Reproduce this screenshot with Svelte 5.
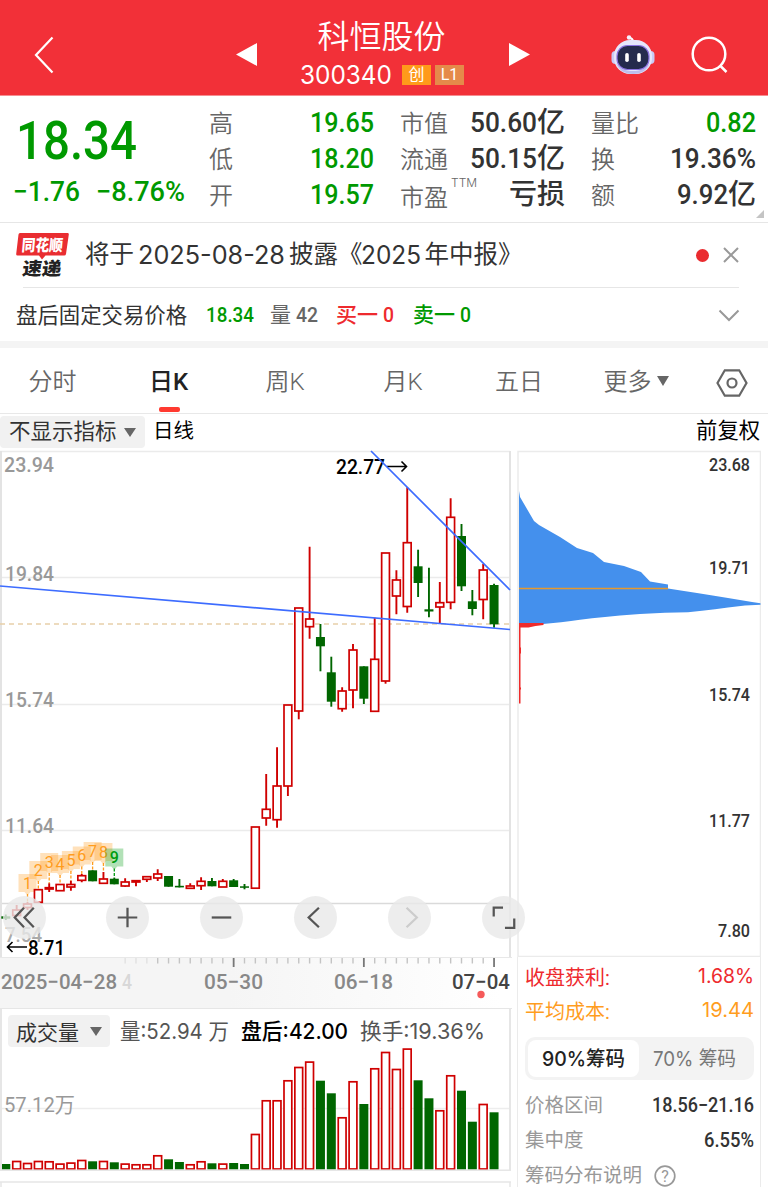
<script>
  const RED = '#cf0000';
  const GREEN = '#006600';

  const step = 10.85;
  const cx = (i) => 5.8 + i * step;

  // [high, body top, body bottom, low, up?] in chart pixels
  const candles = [
    [914.5, 916.3, 918.7, 920, 0], [905, 910, 915.5, 916, 1], [902, 904, 907.5, 910, 1],
    [889.5, 889.7, 902.3, 902.5, 1], [883.3, 887.7, 889, 892, 1], [884, 884.5, 890.7, 891, 1],
    [880.7, 884.5, 887, 890.7, 1], [874, 875.7, 880.3, 882.3, 1], [870.3, 870.3, 881.3, 881.3, 0],
    [872, 879, 883.3, 884, 1], [877.7, 878.7, 884.3, 884.3, 0], [878.3, 882, 886, 886.7, 1],
    [880, 880.7, 882, 886.3, 1], [876, 876.7, 879.3, 882, 1], [869.3, 874, 878, 881, 1],
    [876, 876, 886.7, 886.7, 0], [879, 885.8, 887.4, 887.4, 0], [883.3, 886, 888.3, 889, 1],
    [877.3, 881.3, 885.7, 890, 1], [878, 881, 886.3, 886.3, 0], [879, 881.3, 887, 887, 1],
    [879, 880.3, 887, 887, 0], [884, 886.3, 887.8, 889.3, 0], [827, 827, 888.2, 888.2, 1],
    [774, 809.3, 818, 825.7, 1], [747.3, 786, 819.7, 827.7, 1], [705, 705, 786, 796, 1],
    [608, 608, 711, 719.3, 1], [546.7, 619, 626.7, 638.7, 1], [624, 637, 646.3, 671.3, 0],
    [656.7, 672.3, 701.7, 706.7, 0], [687.3, 691, 708.7, 711.7, 1], [644, 650, 690, 708.3, 1],
    [666.3, 666.3, 698.7, 704, 0], [617.7, 659.3, 711.3, 711.3, 1], [553, 553, 681, 683.7, 1],
    [570.3, 580, 596, 614.3, 1], [487.3, 542.7, 606.5, 612.7, 1], [549.7, 566.3, 583, 597, 0],
    [567.7, 609.3, 611.5, 617.3, 0], [582, 602.7, 607, 623.3, 1], [498.3, 517.3, 602.3, 609.3, 1],
    [524, 536, 586.3, 591, 0], [590, 601.3, 609, 615.3, 0], [564, 570, 599.5, 619.3, 1],
    [583.7, 585, 624.3, 627.7, 0]
  ];

  // top edge of each volume bar
  const volumes = [
    1164, 1160.7, 1162.7, 1160.7, 1161, 1163.3, 1162.3, 1159.7, 1161.3, 1160.7, 1162.3, 1163.3,
    1164, 1164, 1155, 1159.3, 1162, 1164, 1161, 1163.3, 1163.3, 1163, 1164, 1133.7, 1100, 1100,
    1080, 1066.7, 1061.3, 1080.7, 1093.3, 1117, 1081, 1104, 1068, 1051.7, 1068.7, 1048.3, 1080.3,
    1098.3, 1110, 1075, 1090.7, 1121.7, 1103.7, 1112.3
  ];

  // nine-turn markers, first one sits on candle 2
  const marks = [883, 870, 862, 864, 860, 855.5, 851, 852, 857.5];

  const ticks = candles.map((_, i) => i).filter((i) => i > 10);

  const prices = [
    ['高', '19.65'],
    ['低', '18.20'],
    ['开', '19.57']
  ];

  const chips =
    '519,491 520,497 534,521 539,525 560,537 577,548 593,553 604,562 624,566 641,572 650,581.5 668,584.5 668,588.5 684,591 697,593 711,595.2 728,598 740,600 752,602 760.5,603.3 760.5,604.7 745,605.5 728,607.5 715,609.3 702,610.7 688,612.3 665,612.8 640,614 620,615.5 605,617 592,618.3 580,619.7 571,621 561,622.3 543,624 519,624';
</script>

{#snippet fit(text, width, size, weight = 500, font = 'Roboto')}
  <svg class="fit" {width} height={Math.round(size * 0.71)}>
    <text
      x="0"
      y={Math.round(size * 0.71)}
      textLength={width}
      lengthAdjust="spacingAndGlyphs"
      font-size={size}
      font-weight={weight}
      font-family="{font}, 'Noto Sans CJK SC', sans-serif"
      fill="currentColor">{text}</text>
  </svg>
{/snippet}

{#snippet label(text, x, y, width, size, fill, weight = 400)}
  <text
    {x}
    {y}
    {fill}
    textLength={width}
    lengthAdjust="spacingAndGlyphs"
    font-size={size}
    font-weight={weight}>{text}</text>
{/snippet}

<div class="page">
  <header>
    <svg class="back" width="20" height="38" viewBox="0 0 20 38"><path d="M18.5 1.5 2 19l16.500 17.500" /></svg>
    <svg class="prev" width="21" height="23"><path d="M21 0v23L0 11.500z" /></svg>
    <div class="title">
      <div class="name">科恒股份</div>
      <div class="code">
        {@render fit('300340', 92, 25, 400, 'Inter')}
        <span class="tag">创</span><span class="tag level">L1</span>
      </div>
    </div>
    <svg class="next" width="21" height="23"><path d="M0 0v23l21-11.500z" /></svg>
    <svg class="robot" width="44" height="42" viewBox="0 0 44 42">
      <path d="M22 8c0-3-1-4-4-4" fill="none" stroke="#fff" stroke-width="2" />
      <circle cx="18" cy="3.500" r="2.200" fill="#f5f2ff" />
      <rect x="0.500" y="17" width="9" height="13" rx="4" fill="#c9caf6" />
      <rect x="34.500" y="17" width="9" height="13" rx="4" fill="#c9caf6" />
      <rect x="3" y="6" width="38" height="34" rx="16" fill="#e6e6fb" />
      <path d="M5 29c3 7 8 11 17 11s14-4 17-11c-4 6-9 8-17 8S9 35 5 29z" fill="#bcbdec" />
      <rect x="6" y="11.500" width="32" height="24" rx="10.500" fill="#252b4d" stroke="#8b72e0" stroke-width="1.200" />
      <rect x="14.200" y="19" width="3.600" height="9" rx="1.800" fill="#fff" />
      <rect x="26.200" y="19" width="3.600" height="9" rx="1.800" fill="#fff" />
    </svg>
    <svg class="search" width="38" height="38" viewBox="0 0 38 38"><circle cx="18" cy="18" r="16.300" /><path d="m29.500 30 6 6" /></svg>
  </header>

  <section class="quote">
    <div class="price green">
      <div class="last">{@render fit('18.34', 121, 54.5, 500)}</div>
      <div class="change">
        {@render fit('−1.76', 67, 28)}
        {@render fit('−8.76%', 89, 28)}
      </div>
    </div>
    <div class="col">
      {#each prices as [name, value]}
        <div class="cell"><span>{name}</span><b class="green">{@render fit(value, 64, 28)}</b></div>
      {/each}
    </div>
    <div class="col">
      <div class="cell"><span>市值</span><b>{@render fit('50.60', 67, 28)}亿</b></div>
      <div class="cell"><span>流通</span><b>{@render fit('50.15', 67, 28)}亿</b></div>
      <div class="cell"><span class="low">市盈<sup>TTM</sup></span><b>亏损</b></div>
    </div>
    <div class="col">
      <div class="cell"><span>量比</span><b class="green">{@render fit('0.82', 50, 28)}</b></div>
      <div class="cell"><span>换</span><b>{@render fit('19.36%', 86, 28)}</b></div>
      <div class="cell"><span>额</span><b>{@render fit('9.92', 51, 28)}亿</b></div>
    </div>
    <i class="corner"></i>
  </section>

  <section class="news">
    <svg class="logo" width="54" height="46" viewBox="0 0 54 46">
      <path d="M4 1h47.500q1.500 0 1.300 1.500L50 22q-.3 1.500-1.800 1.500H29.500L26 27.500l-3-4H1.500Q0 23.500.2 22L2.500 2.500Q2.700 1 4 1z" fill="#e92d31" />
      <text x="7" y="19" font-size="16" textLength="41" lengthAdjust="spacingAndGlyphs" fill="#fff" transform="skewX(-5)">同花顺</text>
      <text x="11" y="43" font-size="18" textLength="39" lengthAdjust="spacingAndGlyphs" fill="#222" transform="skewX(-7)">速递</text>
    </svg>
    <div class="headline">
      <span>将于</span>
      {@render fit('2025-08-28', 147, 25, 400, 'Inter')}
      <span>披露《</span>
      {@render fit('2025', 60, 25, 400, 'Inter')}
      <span>年中报》</span>
    </div>
    <i class="dot"></i>
    <svg class="close" width="16" height="16"><path d="m1 1 14 14M15 1 1 15" /></svg>
  </section>

  <section class="after">
    <span class="fixed">盘后固定交易价格</span>
    <span class="green p">{@render fit('18.34', 48, 21)}</span>
    <span class="gray vol">量 {@render fit('42', 22, 21)}</span>
    <span class="red bid">买一 {@render fit('0', 11, 21)}</span>
    <span class="green">卖一 {@render fit('0', 11, 21)}</span>
    <svg class="chev" width="22" height="13"><path d="m1.500 1.500 9.500 9.500 9.500-9.500" /></svg>
  </section>

  <nav>
    <span>分时</span>
    <span class="active">日K</span>
    <span>周K</span>
    <span>月K</span>
    <span>五日</span>
    <span class="more">更多<svg width="12" height="10"><path d="M0 0h12L6 10z" /></svg></span>
    <svg class="gear" width="32" height="28" viewBox="0 0 32 28"><path d="M8.800 1.300h14.400L30.500 14l-7.300 12.700H8.800L1.500 14z" /><circle cx="16" cy="14" r="4.500" /></svg>
  </nav>

  <div class="toolbar">
    <span class="select">不显示指标<svg width="12" height="9"><path d="M0 0h12L6 9z" /></svg></span>
    <span class="period">日线</span>
    <span class="adjust">前复权</span>
  </div>

  <main>
    <div class="left">
      <svg class="kline" width="512" height="507" viewBox="0 450 512 507">
        <g stroke="#ebebeb" stroke-width="1.5" fill="none">
          <path d="M0 451.500h510M2 577.500h508M2 704.500h508M2 830.500h508" />
          <path d="M1 451v506M510 451v506" stroke="#e3e3e3" stroke-width="2" />
          <path d="M2 903.500h508" stroke="#dadada" />
        </g>
        {@render label('23.94', 4, 472, 50, 21, '#999', 500)}
        {@render label('19.84', 5, 581, 49, 21, '#999', 500)}
        {@render label('15.74', 5, 707, 49, 21, '#999', 500)}
        {@render label('11.64', 5, 833, 49, 21, '#999', 500)}
        {@render label('7.54', 5, 942, 37, 21, '#aaa', 500)}
        <path d="M0 624h510" stroke="#e8d0a9" stroke-width="1.300" stroke-dasharray="5 4" />

        {#each marks as y, i}
          {@const x = cx(i + 2)}
          {@const tint = i === 8 ? '#009c10' : '#ff9d1e'}
          <path
            d="M{x - 9} {y - 9}h18v18h-6l-3 3.500-3-3.500h-6z"
            fill={tint}
            fill-opacity="0.3" />
          <path d="M{x} {y + 11}V{candles[i + 2][0]}" stroke={tint} stroke-width="1.300" stroke-dasharray="3 1.500" />
          <text {x} y={y + 5.5} text-anchor="middle" font-size="16" font-weight={i === 8 ? 500 : 400} fill={tint}>{i + 1}</text>
        {/each}

        {#each candles as [high, top, bottom, low, up], i}
          {@const x = cx(i)}
          {#if up}
            <path d="M{x} {high}V{top}M{x} {bottom}V{low}" stroke={RED} stroke-width="1.900" />
            <rect x={x - 3.9} y={top} width="7.8" height={bottom - top} fill="#fff" stroke={RED} stroke-width="1.700" />
          {:else}
            <path d="M{x} {high}V{low}" stroke={GREEN} stroke-width="1.900" />
            <rect x={x - 4.5} y={top} width="9" height={bottom - top} fill={GREEN} />
          {/if}
        {/each}

        {@render label('22.77', 336, 474, 49, 21, '#000', 500)}
        <path class="arrow" d="M387 466.500h19.500m-5-5 5 5-5 5" />
        {@render label('8.71', 28, 954.5, 37, 21, '#000', 500)}
        <path class="arrow" d="M27 947H7.500m5-5-5 5 5 5" />
        <path class="trend" d="M0 586 510 629.500M371 451l139 139" />
      </svg>

      <svg class="axis" width="512" height="50" viewBox="0 957 512 50">
        {#each ticks as i}
          {@const major = [21, 33, 45].includes(i)}
          <path
            d="M{cx(i)} 957v{major ? 9 : 5.500}"
            stroke={major ? '#777' : '#c4c4c4'}
            stroke-width={major ? 1.8 : 1.4}
            opacity={i < 14 ? 0.4 : 1} />
        {/each}
        {@render label('2025−04−28', 1, 987.5, 116, 21, '#888', 500)}
        {@render label('4', 122, 987.5, 10, 21, '#d8d8d8', 500)}
        {@render label('05−30', 204, 987.5, 59, 21, '#888', 500)}
        {@render label('06−18', 334, 987.5, 59, 21, '#888', 500)}
        {@render label('07−04', 452, 987.5, 58, 21, '#444', 500)}
        <circle cx="481" cy="993.500" r="3.700" fill="#f55a5a" />
      </svg>

      <div class="controls">
        <span><svg viewBox="0 0 44 44"><path d="M21.500 12 12 22l9.500 10M31.500 12 22 22l9.500 10" /></svg></span>
        <span><svg viewBox="0 0 44 44"><path d="M22 12v20M12 22h20" /></svg></span>
        <span><svg viewBox="0 0 44 44"><path d="M12 22h20" /></svg></span>
        <span><svg viewBox="0 0 44 44"><path d="M25.500 12 15 22l10.500 10" /></svg></span>
        <span class="off"><svg viewBox="0 0 44 44"><path d="M19 12l10.500 10L19 32" /></svg></span>
        <span><svg viewBox="0 0 44 44"><path d="M12 21v-9h9.500M33 23v9.500H23.500" /></svg></span>
      </div>

      <div class="volume">
        <div class="legend">
          <span class="select">成交量<svg width="12" height="9"><path d="M0 0h12L6 9z" /></svg></span>
          <span class="v1">{@render fit('量:52.94 万', 109, 21.5, 400, 'Inter')}</span>
          <span class="v2">{@render fit('盘后:42.00', 107, 21.5, 500, 'Inter')}</span>
          <span class="v3">{@render fit('换手:19.36%', 125, 21.5, 400, 'Inter')}</span>
        </div>
        <svg width="512" height="140" viewBox="0 1047 512 140">
          <path d="M2 1108.500h508" stroke="#ededed" stroke-width="1.500" />
          {@render label('57.12万', 4, 1112, 71, 21, '#999', 400)}
          {#each volumes as y, i}
            {#if candles[i][4]}
              <rect x={cx(i) - 3.9} y={y + 0.8} width="7.8" height={1168.2 - y} fill="#fff" stroke={RED} stroke-width="1.700" />
            {:else}
              <rect x={cx(i) - 4.5} {y} width="9" height={1169.5 - y} fill={GREEN} />
            {/if}
          {/each}
          <path d="M1 1047v123M510 1047v123" stroke="#e6e6e6" stroke-width="2" />
          <path d="M0 1170.300h511M0 1182h511M1 1182v5M510 1182v5" stroke="#e6e6e6" stroke-width="1.500" />
        </svg>
      </div>
    </div>

    <div class="right">
      <svg width="244" height="507" viewBox="517 450 244 507">
        <path d="M518 957V451.500h242.500V957M518 956.500h242.500" fill="none" stroke="#ebebeb" stroke-width="1.500" />
        <polygon points={chips} fill="#4490ed" />
        <path d="M519 588.500h149" stroke="#e5992e" stroke-width="1.500" />
        <path d="M519 623h24.500v2l-8 1-7 1.500h-8v20h.5v6h-.5v34h.5v2h-.5v14h-1.500z" fill="#ee2b2b" />
        {@render label('23.68', 709, 471, 41, 18, '#333', 500)}
        {@render label('19.71', 709, 574, 41, 18, '#333', 500)}
        {@render label('15.74', 709, 700.5, 41, 18, '#333', 500)}
        {@render label('11.77', 709, 827, 41, 18, '#333', 500)}
        {@render label('7.80', 718, 937, 32, 18, '#333', 500)}
      </svg>
      <div class="info">
        <div class="row red"><span>收盘获利:</span>{@render fit('1.68%', 56, 20, 400, 'Inter')}</div>
        <div class="row orange"><span>平均成本:</span>{@render fit('19.44', 52, 20, 400, 'Inter')}</div>
        <div class="switch">
          <span class="on">{@render fit('90%筹码', 83, 20, 500, 'Inter')}</span>
          <span>{@render fit('70% 筹码', 83, 20, 400, 'Inter')}</span>
        </div>
        <div class="row"><span>价格区间</span><b>{@render fit('18.56−21.16', 102, 20)}</b></div>
        <div class="row"><span>集中度</span><b>{@render fit('6.55%', 50, 20)}</b></div>
        <div class="row help">
          <span>筹码分布说明</span>
          <svg width="22" height="22" viewBox="0 0 22 22"><circle cx="11" cy="11" r="9.800" /><text x="11" y="16.500" text-anchor="middle">?</text></svg>
        </div>
      </div>
    </div>
  </main>
</div>

<style>
  :global(body) {
    background: #fff;
    overflow: hidden;
  }
  .page {
    width: 768px;
    height: 1187px;
    overflow: hidden;
    font-family: Roboto, 'Noto Sans CJK SC', sans-serif;
    color: #333;
    background: #fff;
  }
  .page :global(svg) {
    display: block;
    flex: none;
  }
  .page .fit {
    display: inline-block;
    overflow: visible;
    vertical-align: baseline;
  }
  .green { color: #009900; }
  .red { color: #ee2a2e; }
  .orange { color: #ff9d1e; }
  .gray { color: #666; }

  header {
    display: flex;
    height: 96px;
    box-sizing: border-box;
    background: #f23038;
    color: #fff;
    border-bottom: 1px solid #f68d91;
    align-items: center;
    padding-top: 14px;
  }
  header .back, header .search {
    fill: none;
    stroke: #fff;
    stroke-width: 2.2;
  }
  header .back { margin-left: 34px; }
  header .prev { margin-left: 182px; fill: #fff; }
  header .next { fill: #fff; }
  header .robot { margin-left: 81px; }
  header .search { margin-left: 36px; stroke-width: 2.5; }
  .title {
    width: 249px;
    padding-right: 3px;
    margin-top: -14px;
    text-align: center;
  }
  .name {
    font-size: 32px;
    line-height: 38px;
    margin-top: 17px;
    font-weight: 350;
  }
  .code {
    display: flex;
    align-items: center;
    justify-content: center;
    height: 38px;
    padding-left: 1px;
  }
  .tag {
    width: 29px;
    height: 20px;
    margin-left: 10px;
    background: #ff9a1a;
    font-size: 16px;
    line-height: 20px;
  }
  .tag.level {
    margin-left: 4px;
    background: #e58a4a;
  }

  .quote {
    display: flex;
    position: relative;
    height: 126px;
    border-bottom: 1px solid #e6e6e6;
  }
  .price { width: 209px; }
  .last {
    height: 39px;
    padding: 24px 0 0 16px;
    line-height: 0;
  }
  .change {
    display: flex;
    gap: 16px;
    padding: 22px 0 0 13px;
  }
  .col {
    padding-top: 9px;
    width: 165px;
  }
  .col + .col { margin-left: 26px; }
  .cell {
    display: flex;
    justify-content: space-between;
    height: 36px;
    line-height: 36px;
    align-items: baseline;
  }
  .cell span {
    font-size: 24px;
    color: #666;
    font-weight: 350;
  }
  .cell b {
    font-size: 28px;
    font-weight: 500;
  }
  .low { position: relative; top: 2px; }
  sup {
    position: absolute;
    left: 51px;
    top: -15px;
    font-size: 12px;
    font-family: Inter, sans-serif;
  }
  .corner {
    position: absolute;
    right: 4px;
    bottom: 4px;
    border: 4.500px solid #c4c4c4;
    border-top-color: transparent;
    border-left-color: transparent;
  }

  .news {
    display: flex;
    align-items: center;
    height: 65px;
    box-sizing: border-box;
    margin: 0 29px 0 23px;
    border-bottom: 1px solid #e6e6e6;
  }
  .logo {
    margin-left: -7px;
    font-weight: 900;
    overflow: visible;
  }
  .headline {
    display: flex;
    align-items: center;
    gap: 4px;
    width: 612px;
    margin-left: 15px;
    color: #333;
    font-size: 24.500px;
    line-height: 36px;
    white-space: nowrap;
  }
  .headline span:nth-of-type(2) { margin-right: -6px; }
  .dot {
    width: 13px;
    height: 13px;
    border-radius: 50%;
    background: #ea2b2f;
  }
  .close {
    margin-left: 14px;
    stroke: #999;
    stroke-width: 2;
  }

  .after {
    display: flex;
    align-items: center;
    height: 51px;
    padding: 2px 0 0 16px;
    border-bottom: 7px solid #f4f4f4;
    font-size: 21px;
    line-height: 51px;
  }
  .fixed { width: 190px; font-size: 21.4px; }
  .after span { white-space: nowrap; }
  .after .p { width: 64px; }
  .vol { width: 66px; }
  .bid { width: 77px; }
  .chev {
    margin-left: 247px;
    fill: none;
    stroke: #999;
    stroke-width: 2;
  }
  .after .red, .after .green { font-weight: 500; }

  nav {
    display: grid;
    grid-template-columns: 105px 127px 106px 130px 102px 130px 62px;
    height: 66px;
    box-sizing: border-box;
    border-bottom: 1px solid #e8e8e8;
    font-size: 24px;
    line-height: 69px;
    text-align: center;
    color: #666;
    font-weight: 350;
  }
  nav .active {
    position: relative;
    height: 65px;
    font-weight: 500;
    color: #222;
  }
  nav .active::after {
    content: '';
    position: absolute;
    left: 54px;
    bottom: 1px;
    width: 21px;
    height: 5px;
    border-radius: 2px;
    background: #ff3a30;
  }
  .more {
    display: flex;
    align-items: center;
    justify-content: center;
    height: 69px;
    gap: 5px;
    padding-left: 2px;
  }
  .more svg { margin-top: -4px; }
  .more svg, .select svg { fill: #666; }
  .gear {
    align-self: center;
    margin-left: 16px;
    fill: none;
    stroke: #666;
    stroke-width: 2.2;
  }

  .toolbar {
    display: flex;
    align-items: center;
    height: 36px;
    font-size: 20.500px;
    line-height: 30px;
    color: #000;
  }
  .select {
    display: flex;
    align-items: center;
    justify-content: space-between;
    box-sizing: border-box;
    width: 145px;
    height: 32px;
    padding: 0 9px;
    border-radius: 4px;
    background: #f1f1f1;
    font-size: 21.500px;
    color: #333;
    white-space: nowrap;
  }
  .period { margin: -2px 0 0 8px; }
  .adjust {
    margin: -2px 8px 0 auto;
    font-size: 21.300px;
  }

  main { display: flex; }
  .left {
    position: relative;
    width: 512px;
    margin-right: 5px;
  }
  .arrow {
    fill: none;
    stroke: #000;
    stroke-width: 1.6;
  }
  .trend {
    fill: none;
    stroke: #3d6cff;
    stroke-width: 1.7;
  }
  .axis {
    background: linear-gradient(90deg, #f5f5f5 45%, #fff 98%);
    border-top: 1px solid #e8e8e8;
  }
  .controls {
    position: absolute;
    left: 3px;
    top: 446px;
    display: flex;
    gap: 51px;
  }
  .controls span {
    width: 43px;
    height: 43px;
    border-radius: 50%;
    background: rgba(232, 232, 232, 0.8);
  }
  .controls span:first-child { margin-right: 9px; }
  .controls svg {
    fill: none;
    stroke: #555;
    stroke-width: 2.3;
  }
  .controls .off svg { stroke: #ccc; }

  .volume { border-top: 1px solid #e6e6e6; }
  .legend {
    display: flex;
    align-items: center;
    height: 34px;
    border-left: 2px solid #e6e6e6;
    border-right: 2px solid #e6e6e6;
    width: 507px;
    padding-top: 5px;
    margin-bottom: -1px;
  }
  .legend span { display: flex; }
  .legend .select {
    width: 102px;
    margin-left: 6px;
    padding: 0 8px;
    font-size: 21px;
  }
  .legend .v1 { margin-left: 10px; color: #555; }
  .legend .v2 { margin-left: 12px; color: #000; }
  .legend .v3 { margin-left: 12px; color: #555; }

  .right { width: 244px; }
  .info {
    height: 230px;
    box-sizing: border-box;
    border-left: 1.500px solid #ebebeb;
    border-right: 1.500px solid #ebebeb;
    padding: 2px 6px 0 7px;
  }
  .row {
    display: flex;
    align-items: center;
    justify-content: space-between;
    height: 34px;
    font-size: 20px;
  }
  .switch {
    display: flex;
    align-items: center;
    box-sizing: border-box;
    height: 43px;
    margin: 10px 0 8px;
    padding: 3px;
    border-radius: 10px;
    background: #f3f3f3;
    color: #777;
  }
  .switch span {
    display: flex;
    align-items: center;
    justify-content: center;
    width: 111px;
    height: 37px;
    border-radius: 8px;
  }
  .switch .on {
    background: #fff;
    color: #222;
  }
  .switch ~ .row {
    height: 35px;
    font-size: 19.500px;
    line-height: 26px;
    color: #999;
  }
  .row b { color: #333; }
  .help svg {
    margin-right: auto;
    margin-left: 12px;
    fill: none;
    stroke: #999;
    stroke-width: 1.7;
  }
  .help text {
    fill: #999;
    stroke: none;
    font-size: 16px;
  }
</style>
